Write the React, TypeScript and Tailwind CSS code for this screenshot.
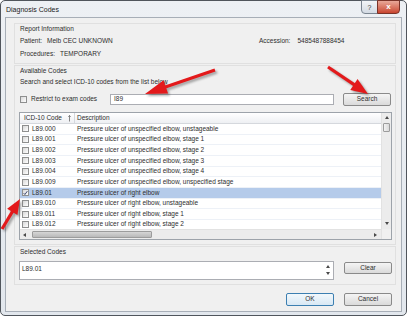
import React from "react";

const rows: [string, string][] = [
  ["L89.000", "Pressure ulcer of unspecified elbow, unstageable"],
  ["L89.001", "Pressure ulcer of unspecified elbow, stage 1"],
  ["L89.002", "Pressure ulcer of unspecified elbow, stage 2"],
  ["L89.003", "Pressure ulcer of unspecified elbow, stage 3"],
  ["L89.004", "Pressure ulcer of unspecified elbow, stage 4"],
  ["L89.009", "Pressure ulcer of unspecified elbow, unspecified stage"],
  ["L89.01", "Pressure ulcer of right elbow"],
  ["L89.010", "Pressure ulcer of right elbow, unstageable"],
  ["L89.011", "Pressure ulcer of right elbow, stage 1"],
  ["L89.012", "Pressure ulcer of right elbow, stage 2"],
];

function Box({ checked }: { checked?: boolean }) {
  return (
    <span className="flex items-center justify-center w-[7px] h-[7px] shrink-0 border border-[#8e8f8f] bg-linear-to-br from-[#d8d8d8] to-white">
      {checked && (
        <svg width="6" height="6" viewBox="0 0 6 6">
          <path d="M0.8 3.2 L2.3 4.8 L5.2 0.8" fill="none" stroke="#1c2a5c" strokeWidth="1" />
        </svg>
      )}
    </span>
  );
}

function Btn({ children, def, className = "" }: { children: React.ReactNode; def?: boolean; className?: string }) {
  return (
    <div
      className={`flex items-center justify-center w-[48px] rounded-[2px] border ${
        def ? "border-[#3c7fb1] from-[#f2f8fc] to-[#d8e8f4]" : "border-[#8a8a8a] from-[#f5f5f5] to-[#dadada]"
      } bg-linear-to-b ${className}`}
    >
      {children}
    </div>
  );
}

function Tri({ dir }: { dir: "up" | "down" | "left" | "right" }) {
  const d = {
    up: "M0 3 L2 0 L4 3 Z",
    down: "M0 0 L4 0 L2 3 Z",
    left: "M3 0 L3 4 L0 2 Z",
    right: "M0 0 L0 4 L3 2 Z",
  }[dir];
  return (
    <svg width="4" height="4" viewBox="0 0 4 4">
      <path d={d} fill="#4a4a4a" />
    </svg>
  );
}

function Arrow({ x1, y1, x2, y2, head, wide }: { x1: number; y1: number; x2: number; y2: number; head: number; wide: number }) {
  const dx = x2 - x1;
  const dy = y2 - y1;
  const len = Math.hypot(dx, dy);
  const ux = dx / len;
  const uy = dy / len;
  const bx = x2 - ux * head;
  const by = y2 - uy * head;
  const nx = (-uy * wide) / 2;
  const ny = (ux * wide) / 2;
  const pts = `${x2},${y2} ${bx + nx},${by + ny} ${bx - nx},${by - ny}`;
  const ex = bx + ux * 2;
  const ey = by + uy * 2;
  return (
    <g>
      <g transform="translate(2,2)" opacity="0.45" filter="url(#blur)">
        <line x1={x1} y1={y1} x2={ex} y2={ey} stroke="#444" strokeWidth="3.4" />
        <polygon points={pts} fill="#444" />
      </g>
      <line x1={x1} y1={y1} x2={ex} y2={ey} stroke="#e3191b" strokeWidth="3.2" />
      <polygon points={pts} fill="#e3191b" />
    </g>
  );
}

export default function App() {
  return (
    <div className="relative w-[410px] h-[318px] bg-white font-['Liberation_Sans',Arial,sans-serif] text-[6.5px] leading-none text-[#2e2e2e]">
      <div className="relative w-[407px] h-[316px] rounded-[5px] border border-[#50555c] bg-linear-to-b from-[#edf0f4] to-[#e2e7ed] flex flex-col">
        {/* title bar */}
        <div className="h-[16px] shrink-0 flex items-start">
          <span className="mt-[5px] ml-[5px] text-[7px] text-[#1a1a1a]">Diagnosis Codes</span>
        </div>
        <div className="absolute top-[-1px] right-[6px] flex">
          <div className="w-[17px] h-[14px] flex items-center justify-center rounded-bl-[4px] border border-[#7b8591] bg-linear-to-b from-[#f3f5f8] to-[#d3dae3] text-[7px] text-[#3a3a3a]">
            ?
          </div>
          <div className="w-[23px] h-[14px] -ml-px flex items-center justify-center rounded-br-[4px] border border-[#7a3328] bg-linear-to-b from-[#e8a899] to-[#c8442f] text-[8px] font-bold text-white">
            x
          </div>
        </div>

        {/* client */}
        <div className="flex-1 mx-[4px] mb-[3px] border border-[#a7aeb7] bg-[#f0f0f0] flex flex-col">
          {/* report information */}
          <div className="ml-[8px] mr-[5px] mt-[5px] h-[41px] border border-[#e0e0e0] pl-[5px] pr-[3px] flex flex-col">
            <div className="h-[10px] flex items-center">Report Information</div>
            <div className="mt-[2px] h-[10px] flex items-center">
              <div className="w-[239px] flex">
                <span>Patient:</span>
                <span className="ml-[5px]">Melb CEC UNKNOWN</span>
              </div>
              <span>Accession:</span>
              <span className="ml-[7px]">5485487888454</span>
            </div>
            <div className="mt-[3px] h-[10px] flex items-center">
              <span>Procedures:</span>
              <span className="ml-[5px]">TEMPORARY</span>
            </div>
          </div>

          {/* available codes */}
          <div className="ml-[8px] mr-[5px] mt-[1px] border border-[#e0e0e0] pl-[5px] pr-[3px] pb-[4px] flex flex-col">
            <div className="h-[10px] flex items-center">Available Codes</div>
            <div className="mt-[1px] h-[10px] flex items-center">Search and select ICD-10 codes from the list below</div>
            <div className="mt-[5px] h-[14px] flex items-center">
              <Box />
              <span className="ml-[4px] w-[79px]">Restrict to exam codes</span>
              <div className="w-[224px] h-[11px] border border-[#abadb3] bg-white flex items-center pl-[3px]">I89</div>
              <Btn className="ml-[9px] h-[13px]">Search</Btn>
            </div>

            {/* table */}
            <div className="mt-[6px] -ml-px h-[128px] border border-[#9da3aa] bg-white flex">
              <div className="flex-1 flex flex-col min-w-0">
                <div className="h-[11px] shrink-0 flex items-center border-b border-[#d5d8dd] bg-linear-to-b from-white to-[#eef0f3]">
                  <div className="w-[55px] h-full flex items-center pl-[4px] border-r border-[#d5d8dd]">
                    <span>ICD-10 Code</span>
                    <svg className="ml-auto mr-[3px]" width="3" height="7" viewBox="0 0 3 7">
                      <path d="M1.5 0.5 V6.5 M0.3 1.8 L1.5 0.5 L2.7 1.8" fill="none" stroke="#555" strokeWidth="0.7" />
                    </svg>
                  </div>
                  <span className="ml-[2px]">Description</span>
                </div>
                <div className="flex-1 overflow-hidden">
                  {rows.map(([code, desc]) => {
                    const sel = code === "L89.01";
                    return (
                      <div
                        key={code}
                        className={`h-[10.67px] flex items-center border-b border-[#edf1f7] whitespace-nowrap ${sel ? "bg-[#b5cbea]" : ""}`}
                      >
                        <div className="w-[55px] flex items-center pl-[2px]">
                          <Box checked={sel} />
                          <span className="ml-[3px]">{code}</span>
                        </div>
                        <span className="ml-[2px]">{desc}</span>
                      </div>
                    );
                  })}
                </div>
                <div className="h-[10px] shrink-0 flex items-center bg-[#ececec] border-t border-[#e2e2e2]">
                  <div className="w-[10px] flex justify-center">
                    <Tri dir="left" />
                  </div>
                  <div className="ml-[2px] w-[120px] h-[7px] rounded-[1px] border border-[#9c9c9c] bg-linear-to-b from-[#d6d6d6] to-[#b9b9b9]" />
                  <div className="ml-auto w-[10px] flex justify-center">
                    <Tri dir="right" />
                  </div>
                </div>
              </div>
              <div className="w-[10px] shrink-0 flex flex-col bg-[#ececec] border-l border-[#e2e2e2]">
                <div className="h-[10px] flex items-center justify-center">
                  <Tri dir="up" />
                </div>
                <div className="mx-[1px] h-[9px] rounded-[1px] border border-[#9c9c9c] bg-linear-to-r from-[#f2f2f2] to-[#d9d9d9]" />
                <div className="flex-1" />
                <div className="h-[10px] flex items-center justify-center">
                  <Tri dir="down" />
                </div>
                <div className="h-[10px] bg-[#f0f0f0]" />
              </div>
            </div>
          </div>

          {/* selected codes */}
          <div className="ml-[8px] mr-[5px] mt-[1px] border border-[#e0e0e0] pl-[5px] pr-[3px] pb-[4px] flex flex-col">
            <div className="h-[9px] mt-[1px] flex items-center">Selected Codes</div>
            <div className="mt-[4px] flex items-start">
              <div className="-ml-px w-[315px] h-[19px] border border-[#abadb3] bg-white flex">
                <span className="pl-[2px] pt-[4px] flex-1">L89.01</span>
                <div className="w-[10px] flex flex-col items-center justify-between py-[3px]">
                  <Tri dir="up" />
                  <Tri dir="down" />
                </div>
              </div>
              <Btn className="ml-auto mt-[1px] h-[12px]">Clear</Btn>
            </div>
          </div>

          {/* dialog buttons */}
          <div className="mt-[8px] mr-[9px] flex justify-end gap-[10px]">
            <Btn def className="h-[13px]">OK</Btn>
            <Btn className="h-[13px]">Cancel</Btn>
          </div>
        </div>
      </div>

      {/* callout arrows */}
      <svg className="absolute inset-0 pointer-events-none" width="410" height="318" viewBox="0 0 410 318">
        <defs>
          <filter id="blur" x="-20%" y="-20%" width="140%" height="140%">
            <feGaussianBlur stdDeviation="0.9" />
          </filter>
        </defs>
        <Arrow x1={215} y1={70} x2={145} y2={94} head={22} wide={14} />
        <Arrow x1={328} y1={67} x2={368} y2={94} head={17} wide={13} />
        <Arrow x1={2} y1={229} x2={20} y2={199} head={15} wide={12} />
      </svg>
    </div>
  );
}
